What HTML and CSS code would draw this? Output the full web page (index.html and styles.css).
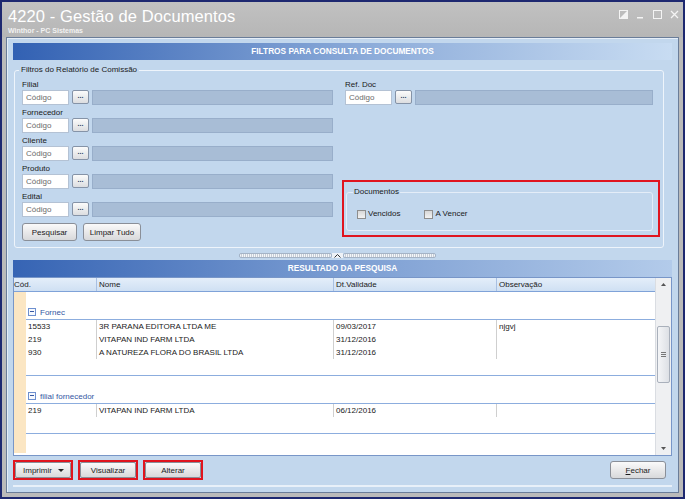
FILE: index.html
```html
<!DOCTYPE html>
<html lang="pt">
<head>
    <meta charset="UTF-8">
    <title>4220 - Gestão de Documentos</title>
    <link rel="stylesheet" href="styles.css">
</head>
<body>
<div class="window">
    <div class="titlebar">
        <div class="title-text">
            <div class="title">4220 - Gestão de Documentos</div>
            <div class="subtitle">Winthor - PC Sistemas</div>
        </div>
        <div class="win-buttons">
            <svg width="9" height="9" viewBox="0 0 9 9"><rect x="0.5" y="0.5" width="8" height="8" fill="none" stroke="#f4f4f4"/><path d="M1 8 L8 1 L8 8 Z" fill="#f4f4f4"/></svg>
            <svg width="9" height="9" viewBox="0 0 9 9"><rect x="1" y="7" width="6" height="1.5" fill="#f4f4f4"/></svg>
            <svg width="9" height="9" viewBox="0 0 9 9"><rect x="0.5" y="0.5" width="8" height="8" fill="none" stroke="#f4f4f4"/></svg>
            <svg width="9" height="9" viewBox="0 0 9 9"><path d="M1 1 L8 8 M8 1 L1 8" stroke="#f4f4f4" stroke-width="1.3"/></svg>
        </div>
    </div>

    <div class="client">
        <div class="panel-header">FILTROS PARA CONSULTA DE DOCUMENTOS</div>

        <fieldset class="group">
            <legend>Filtros do Relatório de Comissão</legend>
            <div class="filters">
                <div class="col-left">
                    <div class="field">
                        <div class="field-label">Filial</div>
                        <div class="field-row"><span class="code">Código</span><span class="dots">...</span><span class="desc"></span></div>
                    </div>
                    <div class="field">
                        <div class="field-label">Fornecedor</div>
                        <div class="field-row"><span class="code">Código</span><span class="dots">...</span><span class="desc"></span></div>
                    </div>
                    <div class="field">
                        <div class="field-label">Cliente</div>
                        <div class="field-row"><span class="code">Código</span><span class="dots">...</span><span class="desc"></span></div>
                    </div>
                    <div class="field">
                        <div class="field-label">Produto</div>
                        <div class="field-row"><span class="code">Código</span><span class="dots">...</span><span class="desc"></span></div>
                    </div>
                    <div class="field">
                        <div class="field-label">Edital</div>
                        <div class="field-row"><span class="code">Código</span><span class="dots">...</span><span class="desc"></span></div>
                    </div>
                    <div class="actions">
                        <button class="btn btn-search">Pesquisar</button>
                        <button class="btn btn-clear">Limpar Tudo</button>
                    </div>
                </div>

                <div class="col-right">
                    <div class="field ref">
                        <div class="field-label">Ref. Doc</div>
                        <div class="field-row"><span class="code">Código</span><span class="dots">...</span><span class="desc"></span></div>
                    </div>
                    <div class="mark docs-mark">
                        <fieldset class="docs">
                            <legend>Documentos</legend>
                            <div class="checks">
                                <label class="check"><span class="box"></span>Vencidos</label>
                                <label class="check"><span class="box"></span>A Vencer</label>
                            </div>
                        </fieldset>
                    </div>
                </div>
            </div>
        </fieldset>

        <div class="splitter">
            <div class="grip">
                <span class="grip-dots"></span>
                <span class="grip-arrow"><svg width="7" height="4" viewBox="0 0 7 4"><path d="M0.5 3.5 L3.5 0.5 L6.5 3.5" fill="none" stroke="#333" stroke-width="1"/></svg></span>
                <span class="grip-dots"></span>
            </div>
        </div>

        <div class="panel-header result">RESULTADO DA PESQUISA</div>

        <div class="grid">
            <div class="grid-main">
                <div class="grid-head">
                    <div class="hcell">Cód.</div>
                    <div class="hcell">Nome</div>
                    <div class="hcell">Dt.Validade</div>
                    <div class="hcell last">Observação</div>
                </div>
                <div class="grid-body">
                    <div class="strip"></div>
                    <div class="groups">
                        <div class="grp">
                            <div class="grp-caption"><span class="toggle"></span>Fornec</div>
                            <div class="row"><span>15533</span><span>3R PARANA EDITORA LTDA ME</span><span>09/03/2017</span><span>njgvj</span></div>
                            <div class="row"><span>219</span><span>VITAPAN IND FARM LTDA</span><span>31/12/2016</span><span></span></div>
                            <div class="row"><span>930</span><span>A NATUREZA FLORA DO BRASIL LTDA</span><span>31/12/2016</span><span></span></div>
                            <div class="grp-foot"></div>
                        </div>
                        <div class="grp">
                            <div class="grp-caption"><span class="toggle"></span>filial fornecedor</div>
                            <div class="row"><span>219</span><span>VITAPAN IND FARM LTDA</span><span>06/12/2016</span><span></span></div>
                            <div class="grp-foot"></div>
                        </div>
                    </div>
                </div>
            </div>
            <div class="vscroll">
                <div class="arrow"><svg width="5" height="3" viewBox="0 0 5 3"><path d="M0 3 L2.5 0 L5 3 Z" fill="#555"/></svg></div>
                <div class="track-top"></div>
                <div class="thumb"><svg width="5" height="5" viewBox="0 0 5 5"><path d="M0 0.5 H5 M0 2.5 H5 M0 4.5 H5" stroke="#777" stroke-width="1"/></svg></div>
                <div class="track"></div>
                <div class="arrow"><svg width="5" height="3" viewBox="0 0 5 3"><path d="M0 0 L2.5 3 L5 0 Z" fill="#555"/></svg></div>
            </div>
        </div>

        <div class="footer">
            <div class="mark btn-mark"><button class="btn btn-foot btn-print">Imprimir <svg width="6" height="3" viewBox="0 0 6 3"><path d="M0 0 L3 3 L6 0 Z" fill="#222"/></svg></button></div>
            <div class="mark btn-mark"><button class="btn btn-foot">Visualizar</button></div>
            <div class="mark btn-mark"><button class="btn btn-foot">Alterar</button></div>
            <button class="btn btn-close"><u>F</u>echar</button>
        </div>
    </div>
</div>
</body>
</html>
```

FILE: styles.css
```css
body { margin: 0; background: #1d2870; font-family: "Liberation Sans", Arial, sans-serif; font-size: 8px; color: #1a1a1a; }
.window { width: 685px; height: 499px; box-sizing: border-box; border: 2px solid #1d2870; background: #bababa; display: flex; flex-direction: column; }

/* title bar */
.titlebar { height: 35px; display: flex; justify-content: space-between; padding: 0 0 0 6px; background: linear-gradient(#c1c1c1, #b6b6b6); }
.title { font-size: 16.5px; line-height: 19px; color: #fff; padding-top: 5px; letter-spacing: 0.1px; }
.subtitle { font-size: 7px; font-weight: bold; color: #f2f2f2; line-height: 9px; margin-top: 0; }
.win-buttons { display: flex; gap: 8px; padding: 8px 4px 0 0; }

/* client area */
.client { flex: 1; margin: 0 4px 4px 4px; border: 1px solid #6a7d99; background: #c2d7ed; padding: 5px 6px 0 6px; display: flex; flex-direction: column; box-shadow: inset 1px 1px 0 #e6eef8; }
.panel-header { height: 17px; line-height: 17px; text-align: center; color: #fff; font-weight: bold; font-size: 8.3px; background: linear-gradient(90deg, #3261b3, #8eadda 55%, #c8dcf2); }
.panel-header.result { background: linear-gradient(90deg, #3664b4, #7b9dd2 50%, #b3cbea); }

.group { margin: 5px 8px 0 1px; padding: 4px 7px 6px 7px; border: 1px solid #eef4fb; border-radius: 3px; min-width: 0; }
.group legend { padding: 0 2px; margin-left: -3px; line-height: 10px; }
.docs legend { padding: 0 1px; margin-left: -4px; line-height: 10px; }

.filters { display: grid; grid-template-columns: 311px 1fr; column-gap: 10px; }
.col-left, .col-right { display: flex; flex-direction: column; }

.field { margin-bottom: 2px; }
.field-label { line-height: 11px; height: 11px; }
.field-row { display: flex; height: 15px; align-items: stretch; }
.code { width: 47px; box-sizing: border-box; background: #fff; border: 1px solid #b4c2d4; color: #6a6a6a; padding-left: 3px; line-height: 13px; }
.dots { width: 17px; height: 14px; box-sizing: border-box; margin-left: 3px; border: 1px solid #8593a7; border-radius: 2px; background: linear-gradient(#fbfbfb, #dcdde0); font-size: 7px; font-weight: bold; line-height: 9px; text-align: center; color: #2a3b66; }
.desc { flex: 1; margin-left: 3px; background: #a8bdd6; border: 1px solid #98aeca; }

.actions { display: flex; gap: 6px; margin-top: 4px; }
.btn { font-family: inherit; font-size: 8px; color: #1a1a1a; border: 1px solid #8a8f98; border-radius: 3px; background: linear-gradient(#fafafa, #e9e9ea 50%, #d8d9db); padding: 0; height: 18px; }
.btn-search { width: 55px; }
.btn-clear { width: 58px; }

.col-right { margin-left: -1px; }
.ref { padding-left: 3px; margin-right: 7px; }
.mark { border: 2px solid #e0141e; box-sizing: border-box; }
.docs-mark { margin-top: auto; margin-bottom: 4px; height: 57px; width: 318px; padding: 5px 5px 0 2px; }
.docs { margin: 0; padding: 12px 0 0 10px; height: 44px; box-sizing: border-box; border: 1px solid #e4edf8; border-radius: 3px; }
.checks { display: flex; gap: 24px; }
.check { display: flex; align-items: center; line-height: 10px; }
.box { width: 9px; height: 9px; box-sizing: border-box; border: 1px solid #8e8e8e; background: linear-gradient(#d8d8d8, #f2f2f2); margin-right: 2px; }

/* splitter */
.splitter { height: 12px; display: flex; justify-content: center; align-items: flex-end; }
.grip { display: flex; width: 197px; height: 5px; margin-bottom: 2px; margin-left: -11px; }
.grip-dots { flex: 1; box-sizing: border-box; border: 1px solid #a4b3c6; border-radius: 2px; background: repeating-linear-gradient(90deg, #f4f6f9 0 1px, #c6cdd6 1px 2px); }
.grip-arrow { width: 11px; display: flex; align-items: center; justify-content: center; background: #eef2f7; }

/* grid */
.grid { flex: 1; display: flex; border: 1px solid #7896c8; background: #fff; min-height: 0; }
.grid-main { flex: 1; display: flex; flex-direction: column; }
.grid-head { display: grid; grid-template-columns: 83px 237px 163px 1fr; height: 13px; background: linear-gradient(#e4eefa, #cfe0f3); border-bottom: 1px solid #7fa2d8; }
.hcell { line-height: 13px; padding-left: 2px; border-right: 1px solid #a9c0e2; }
.hcell:first-child { padding-left: 0; }
.hcell.last { border-right: none; }
.grid-body { flex: 1; display: flex; }
.strip { width: 12px; background: #fbe6c3; margin-bottom: 2px; }
.groups { flex: 1; }
.grp-caption { margin-top: 13px; height: 14px; line-height: 13px; border-bottom: 1px solid #8cadde; color: #3557a3; display: flex; align-items: center; padding-left: 2px; }
.toggle { width: 8px; height: 8px; box-sizing: border-box; border: 1px solid #6d8fcf; margin-right: 4px; position: relative; background: #f6f9fe; }
.toggle::after { content: ""; position: absolute; left: 1px; right: 1px; top: 2px; height: 1px; background: #3557a3; }
.row { display: grid; grid-template-columns: 71px 237px 163px 1fr; height: 13px; line-height: 13px; }
.row span { padding-left: 2px; border-right: 1px solid #cfcfcf; white-space: nowrap; }
.row span:last-child { border-right: none; }
.grp-foot { height: 16px; border-bottom: 1px solid #8cadde; }

.vscroll { width: 15px; display: flex; flex-direction: column; background: #eff0f2; border-left: 1px solid #dadde2; }
.arrow { height: 13px; display: flex; align-items: center; justify-content: center; }
.track-top { height: 35px; }
.thumb { height: 57px; margin: 0 1px; box-sizing: border-box; border: 1px solid #a9b0bb; border-radius: 2px; background: linear-gradient(90deg, #f4f5f7, #dde0e5); display: flex; align-items: center; justify-content: center; }
.track { flex: 1; }

/* footer */
.footer { display: flex; gap: 5px; align-items: center; padding: 4px 0 5px 0; border-bottom: 2px solid #e8f0f9; margin-bottom: 5px; }
.btn-mark { width: 60px; height: 20px; padding: 0; }
.btn-foot { width: 100%; height: 100%; border-radius: 2px; }
.btn-print { display: flex; align-items: center; justify-content: space-between; padding: 0 6px 0 7px; }
.btn-close { margin-left: auto; margin-right: 6px; width: 56px; height: 18px; }
```
